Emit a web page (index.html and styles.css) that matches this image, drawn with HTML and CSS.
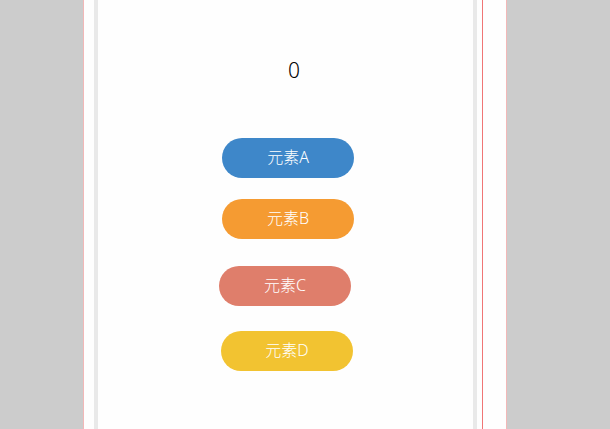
FILE: index.html
```html
<!DOCTYPE html>
<html lang="zh">
<head>
<meta charset="utf-8">
<link rel="stylesheet" href="styles.css">
</head>
<body>
<div class="page">
  <div class="gutter"></div>
  <div class="phone">
    <div class="counter">0</div>
    <div class="btn btn-a">元素A</div>
    <div class="btn btn-b">元素B</div>
    <div class="btn btn-c">元素C</div>
    <div class="btn btn-d">元素D</div>
  </div>
  <div class="gap"></div>
  <div class="rule"></div>
  <div class="rest"></div>
</div>
</body>
</html>
```

FILE: styles.css
```css
html, body {
  margin: 0;
  padding: 0;
  background: #cccccc;
  height: 100%;
}
.page {
  margin-left: 83px;
  width: 422px;
  height: 429px;
  background: #fefefe;
  border-left: 1px solid #f2b8b8;
  border-right: 1px solid #f2b8b8;
  display: flex;
  overflow: hidden;
  font-family: "Noto Sans", "Noto Sans CJK SC", sans-serif;
}
.gutter { width: 10px; flex: none; }
.phone {
  width: 375px;
  flex: none;
  border-left: 4px solid #e9e9e9;
  border-right: 4px solid #e9e9e9;
  background: #fefefe;
  display: flex;
  flex-direction: column;
  align-items: flex-start;
}
.gap { width: 5px; flex: none; }
.rule { width: 1px; flex: none; background: #f07575; }
.rest { flex: 1; }
.counter {
  align-self: stretch;
  text-align: center;
  padding-left: 17px;
  margin-top: 55px;
  font-size: 21px;
  font-weight: 300;
  line-height: 30px;
  color: #000;
}
.btn {
  width: 132px;
  height: 40px;
  border-radius: 20px;
  color: #ffffff;
  font-size: 16px;
  font-weight: 300;
  line-height: 39px;
  padding-bottom: 1px;
  box-sizing: border-box;
  text-align: center;
}
.btn-a { background: #3e87c9; margin-top: 53px; margin-left: 124px; }
.btn-b { background: #f59b32; margin-top: 21px; margin-left: 124px; }
.btn-c { background: #df7e6b; margin-top: 27px; margin-left: 121px; }
.btn-d { background: #f2c331; margin-top: 25px; margin-left: 123px; }
```
